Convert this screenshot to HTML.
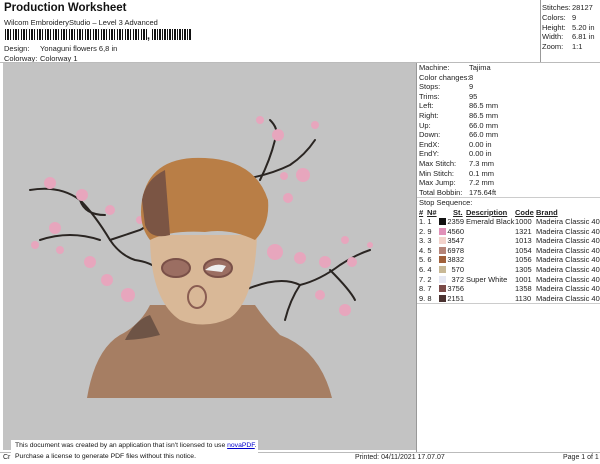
<!DOCTYPE html><html><head><style>
body{margin:0;width:600px;height:464px;background:#fff;position:relative;overflow:hidden;font-family:"Liberation Sans",sans-serif;font-size:7.5px;color:#222}
.a{position:absolute;white-space:nowrap}
.g{position:absolute;left:3px;top:63px;width:413px;height:387px;background:#c3c3c3}
.ln{position:absolute;background:#999}
.sw{display:inline-block;width:7px;height:7px;vertical-align:-1px}
</style></head><body>
<div class="a" style="left:4px;top:2px;font-size:11.5px;font-weight:bold;color:#111">Production Worksheet</div>
<div class="a" style="left:4px;top:18px">Wilcom EmbroideryStudio – Level 3 Advanced</div>
<div class="a" style="left:5px;top:29px;width:143px;height:11px;background:repeating-linear-gradient(90deg,#111 0 1px,#fff 1px 2px,#111 2px 4px,#fff 4px 5px,#111 5px 6px,#fff 6px 8px)"></div>
<div class="a" style="left:147px;top:30px;font-size:11px;font-weight:bold">,</div>
<div class="a" style="left:152px;top:29px;width:39px;height:11px;background:repeating-linear-gradient(90deg,#111 0 1px,#fff 1px 2px,#111 2px 4px,#fff 4px 5px)"></div>
<div class="a" style="left:4px;top:44px">Design:</div><div class="a" style="left:40px;top:44px">Yonaguni flowers 6,8 in</div>
<div class="a" style="left:4px;top:54px">Colorway:</div><div class="a" style="left:40px;top:54px">Colorway 1</div>
<div class="ln" style="left:0;top:62px;width:600px;height:1px;background:#bbb"></div>
<div class="ln" style="left:540px;top:0;width:1px;height:62px"></div>
<div class="ln" style="left:416px;top:63px;width:1px;height:390px"></div>
<div class="g"></div>
<svg class="a" style="left:3px;top:63px" width="413" height="387" viewBox="3 63 413 387">
<g stroke="#2a2522" stroke-width="2" fill="none" stroke-linecap="round">
<path d="M30 190 Q60 185 80 200 Q95 215 110 240 Q120 255 135 260 Q150 262 160 270"/>
<path d="M40 240 Q70 230 100 240"/><path d="M80 200 Q85 215 105 215"/><path d="M110 240 Q125 235 140 230 Q150 225 152 215"/>
<path d="M240 180 Q270 175 290 165 Q305 155 315 140"/><path d="M260 180 Q270 160 275 140 Q280 130 270 120"/>
<path d="M245 290 Q280 275 300 285 Q320 280 340 265 Q355 255 370 250"/><path d="M300 285 Q290 300 285 320"/><path d="M330 270 Q350 290 355 300"/>
</g>
<g fill="#e7a6bd">
<circle cx="50" cy="183" r="6"/><circle cx="82" cy="195" r="6"/><circle cx="110" cy="210" r="5"/><circle cx="55" cy="228" r="6"/><circle cx="90" cy="262" r="6"/><circle cx="107" cy="280" r="6"/><circle cx="35" cy="245" r="4"/><circle cx="60" cy="250" r="4"/><circle cx="140" cy="220" r="4"/>
<circle cx="278" cy="135" r="6"/><circle cx="303" cy="175" r="7"/><circle cx="284" cy="176" r="4"/><circle cx="315" cy="125" r="4"/><circle cx="260" cy="120" r="4"/><circle cx="288" cy="198" r="5"/>
<circle cx="275" cy="252" r="8"/><circle cx="300" cy="258" r="6"/><circle cx="325" cy="262" r="6"/><circle cx="345" cy="240" r="4"/><circle cx="352" cy="262" r="5"/><circle cx="345" cy="310" r="6"/><circle cx="320" cy="295" r="5"/><circle cx="128" cy="295" r="7"/><circle cx="370" cy="245" r="3"/>
</g>
<path d="M87 398 Q95 350 120 335 Q140 325 150 305 L255 305 Q265 320 280 335 Q320 350 332 398 Z" fill="#a67e63"/>
<path d="M125 340 Q135 320 150 315 L160 335 Q140 340 125 340Z" fill="#6e5446"/>
<path d="M150 235 Q150 300 180 320 Q205 330 230 318 Q255 300 257 235 Z" fill="#d9b897"/>
<path d="M142 200 Q150 155 205 158 Q255 160 268 200 Q270 225 255 240 Q230 228 205 232 Q170 230 150 240 Q138 225 142 200Z" fill="#b97e46"/>
<path d="M142 200 Q145 180 165 170 L170 235 Q150 240 145 225Z" fill="#7b5544"/>
<g fill="#9b6e62" stroke="#7a5048" stroke-width="2"><ellipse cx="176" cy="268" rx="14" ry="9"/><ellipse cx="218" cy="268" rx="14" ry="9"/></g>
<path d="M205 270 Q215 262 226 266 L222 272Z" fill="#eee"/>
<ellipse cx="197" cy="297" rx="9" ry="11" fill="none" stroke="#8a5d52" stroke-width="2"/>
</svg>
<div class="a" style="left:542px;top:3px;line-height:9.8px">Stitches:<br>Colors:<br>Height:<br>Width:<br>Zoom:</div>
<div class="a" style="left:572px;top:3px;line-height:9.8px">28127<br>9<br>5.20 in<br>6.81 in<br>1:1</div>
<div class="a" style="left:419px;top:63px;line-height:9.6px">Machine:<br>Color changes:<br>Stops:<br>Trims:<br>Left:<br>Right:<br>Up:<br>Down:<br>EndX:<br>EndY:<br>Max Stitch:<br>Min Stitch:<br>Max Jump:<br>Total Bobbin:</div>
<div class="a" style="left:469px;top:63px;line-height:9.6px">Tajima<br>8<br>9<br>95<br>86.5 mm<br>86.5 mm<br>66.0 mm<br>66.0 mm<br>0.00 in<br>0.00 in<br>7.3 mm<br>0.1 mm<br>7.2 mm<br>175.64ft</div>
<div class="ln" style="left:417px;top:197px;width:183px;height:1px;background:#ccc"></div>
<div class="a" style="left:419px;top:198px">Stop Sequence:</div>
<div class="a" style="left:419px;top:208px;font-weight:bold;text-decoration:underline">#</div>
<div class="a" style="left:427px;top:208px;font-weight:bold;text-decoration:underline">N#</div>
<div class="a" style="left:453px;top:208px;font-weight:bold;text-decoration:underline">St.</div>
<div class="a" style="left:466px;top:208px;font-weight:bold;text-decoration:underline">Description</div>
<div class="a" style="left:515px;top:208px;font-weight:bold;text-decoration:underline">Code</div>
<div class="a" style="left:536px;top:208px;font-weight:bold;text-decoration:underline">Brand</div>
<div class="a" style="left:419px;top:217px;line-height:9.6px">1. 1<br>2. 9<br>3. 3<br>4. 5<br>5. 6<br>6. 4<br>7. 2<br>8. 7<br>9. 8</div>
<div class="a" style="left:439px;top:217px;line-height:9.6px"><span class="sw" style="background:#111"></span><br><span class="sw" style="background:#e090b8"></span><br><span class="sw" style="background:#f3d3cc"></span><br><span class="sw" style="background:#b58478"></span><br><span class="sw" style="background:#a0603a"></span><br><span class="sw" style="background:#c8b896"></span><br><span class="sw" style="background:#e6e8f3"></span><br><span class="sw" style="background:#7a4a48"></span><br><span class="sw" style="background:#4a3230"></span></div>
<div class="a" style="left:447px;top:217px;line-height:9.6px;text-align:right;width:17px">2359<br>4560<br>3547<br>6978<br>3832<br>570<br>372<br>3756<br>2151</div>
<div class="a" style="left:466px;top:217px;line-height:9.6px">Emerald Black<br><br><br><br><br><br>Super White</div>
<div class="a" style="left:515px;top:217px;line-height:9.6px">1000<br>1321<br>1013<br>1054<br>1056<br>1305<br>1001<br>1358<br>1130</div>
<div class="a" style="left:536px;top:217px;line-height:9.6px">Madeira Classic 40<br>Madeira Classic 40<br>Madeira Classic 40<br>Madeira Classic 40<br>Madeira Classic 40<br>Madeira Classic 40<br>Madeira Classic 40<br>Madeira Classic 40<br>Madeira Classic 40</div>
<div class="ln" style="left:417px;top:303px;width:183px;height:1px;background:#ccc"></div>
<div class="ln" style="left:0;top:452px;width:600px;height:1px;background:#bbb"></div>
<div class="a" style="left:3px;top:454px;font-size:7px">Cr</div>
<div class="a" style="left:355px;top:454px;font-size:7px">Printed: 04/11/2021 17.07.07</div>
<div class="a" style="left:563px;top:454px;font-size:7px">Page 1 of 1</div>
<div class="a" style="left:11px;top:440px;width:247px;height:23px;background:#fff"></div>
<div class="a" style="left:15px;top:441px;font-size:6.8px;line-height:10.5px;color:#111">This document was created by an application that isn't licensed to use <span style="color:#00c;text-decoration:underline">novaPDF</span>.<br>Purchase a license to generate PDF files without this notice.</div>
</body></html>
